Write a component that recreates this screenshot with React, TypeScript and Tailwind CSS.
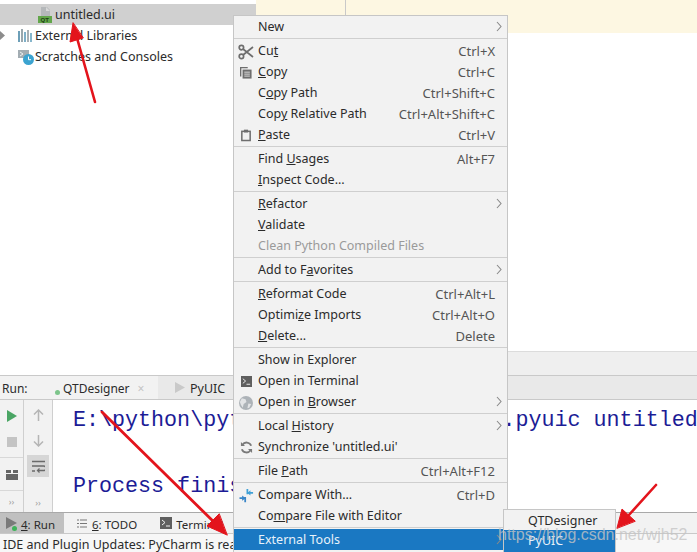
import React from "react";

const Chevron = () => (
  <svg width="6" height="11" viewBox="0 0 6 11" className="absolute right-[5px] top-[5px]">
    <path d="M1 1l4 4.5L1 10" fill="none" stroke="#8a8a8a" strokeWidth="1.1" />
  </svg>
);

const Scissors = () => (
  <svg width="16" height="16" viewBox="0 0 16 16" fill="none" stroke="#6e6e6e" strokeWidth="1.7">
    <circle cx="3.4" cy="3.6" r="2.2" />
    <circle cx="3.4" cy="12.4" r="2.2" />
    <path d="M5 5l10 8M5 11L15 3" />
  </svg>
);
const CopyIcon = () => (
  <svg width="12" height="12" viewBox="0 0 14 14">
    <path d="M0 0h9v1.6H1.6V11H0z" fill="#6e6e6e" />
    <path d="M3 3h10.5v10.5H3z" fill="#6e6e6e" />
    <path d="M5 6h6.5M5 8.3h6.5M5 10.6h6.5" stroke="#eee" strokeWidth="1" />
  </svg>
);
const PasteIcon = () => (
  <svg width="10" height="13" viewBox="0 0 12 14" fill="none">
    <rect x="1" y="2" width="10" height="11" stroke="#6e6e6e" strokeWidth="1.8" />
    <rect x="3.5" y="0" width="5" height="3.4" fill="#6e6e6e" />
  </svg>
);
const TerminalIcon = ({ size = 12 }: { size?: number }) => (
  <svg width={size} height={size} viewBox="0 0 12 12">
    <rect width="12" height="12" fill="#5f5f5f" />
    <path d="M2 3l3 2.5L2 8" fill="none" stroke="#f2f2f2" strokeWidth="1" />
    <path d="M6 9h4" stroke="#f2f2f2" strokeWidth="1" />
  </svg>
);
const GlobeIcon = () => (
  <svg width="14" height="14" viewBox="0 0 15 15">
    <circle cx="7.5" cy="7.5" r="7.5" fill="#adb3b8" />
    <path d="M3 2.5l4 1 1 3-3 2-1 4-2-3-1-3zM10 8l3 .5-2 4-2 .5z" fill="#e2e4e6" />
  </svg>
);
const SyncIcon = () => (
  <svg width="13" height="13" viewBox="0 0 14 14" fill="none" stroke="#7a7a7a" strokeWidth="2">
    <path d="M12 5.2A5.2 5.2 0 0 0 2.6 4.2" />
    <path d="M2 8.800a5.200 5.200 0 0 0 9.400 1" />
    <path d="M1 1v4.400h4.400z M13 13V8.600H8.600z" fill="#7a7a7a" stroke="none" />
  </svg>
);
const CompareIcon = () => (
  <svg width="15" height="14" viewBox="0 0 16 16" fill="none" strokeWidth="2">
    <path d="M0 10.500h5.500M6.500 15V9" stroke="#3a86c8" />
    <path d="M3 7.500L7 10.500 3 13.500z" fill="#3a86c8" />
    <path d="M15.500 4.500H10M9 0v6" stroke="#3fa0d6" />
    <path d="M12.500 1.500L9 4.500l3.500 3z" fill="#3fa0d6" />
  </svg>
);
const QtFile = () => (
  <svg width="15" height="16" viewBox="0 0 15 16">
    <path d="M3 0h6l3 3v7H3z" fill="#b5b8ba" />
    <path d="M8 0v4h4" fill="#d8d8d8" />
    <rect x="0" y="9" width="14" height="7" fill="#62a64a" />
    <text x="2.500" y="15" fontSize="6" fontFamily="Liberation Sans" fontWeight="700" fill="#1f3d16">QT</text>
  </svg>
);
const LibIcon = () => (
  <svg width="15" height="13" viewBox="0 0 15 13">
    <path d="M0 2h2v11H0z" fill="#6d9fb8" />
    <path d="M3 0h2v13H3z" fill="#9aa7ad" />
    <path d="M6 3h2v10H6z" fill="#7fb0c8" />
    <path d="M9 1h2v12H9z" fill="#a9b0b4" />
    <path d="M12 4h2v9h-2z" fill="#86b6cc" />
  </svg>
);
const ScratchIcon = () => (
  <svg width="16" height="15" viewBox="0 0 16 15">
    <path d="M0 0h11v8H0z" fill="#a3adb3" />
    <path d="M2 2l3 2-3 2" fill="none" stroke="#eef1f2" strokeWidth="1" />
    <circle cx="10.500" cy="9.500" r="5.500" fill="#3ba3d0" />
    <path d="M10.500 6.500v3.200h2.500" fill="none" stroke="#fff" strokeWidth="1" />
  </svg>
);

type Row = {
  label: React.ReactNode;
  key?: string;
  sub?: boolean;
  icon?: React.ReactNode;
  disabled?: boolean;
  active?: boolean;
};

const groups: Row[][] = [
  [{ label: "New", sub: true }],
  [
    { label: <>Cu<u>t</u></>, key: "Ctrl+X", icon: <Scissors /> },
    { label: <><u>C</u>opy</>, key: "Ctrl+C", icon: <CopyIcon /> },
    { label: <>C<u>o</u>py Path</>, key: "Ctrl+Shift+C" },
    { label: <>Cop<u>y</u> Relative Path</>, key: "Ctrl+Alt+Shift+C" },
    { label: <><u>P</u>aste</>, key: "Ctrl+V", icon: <PasteIcon /> },
  ],
  [
    { label: <>Find <u>U</u>sages</>, key: "Alt+F7" },
    { label: <><u>I</u>nspect Code...</> },
  ],
  [
    { label: <><u>R</u>efactor</>, sub: true },
    { label: <><u>V</u>alidate</> },
    { label: "Clean Python Compiled Files", disabled: true },
  ],
  [{ label: <>Add to F<u>a</u>vorites</>, sub: true }],
  [
    { label: <><u>R</u>eformat Code</>, key: "Ctrl+Alt+L" },
    { label: <>Optimi<u>z</u>e Imports</>, key: "Ctrl+Alt+O" },
    { label: <><u>D</u>elete...</>, key: "Delete" },
  ],
  [
    { label: "Show in Explorer" },
    { label: "Open in Terminal", icon: <TerminalIcon size={11} /> },
    { label: <>Open in <u>B</u>rowser</>, sub: true, icon: <GlobeIcon /> },
  ],
  [
    { label: <>Local <u>H</u>istory</>, sub: true },
    { label: "Synchronize 'untitled.ui'", icon: <SyncIcon /> },
  ],
  [{ label: <>File <u>P</u>ath</>, key: "Ctrl+Alt+F12" }],
  [
    { label: "Compare With...", key: "Ctrl+D", icon: <CompareIcon /> },
    { label: <>Co<u>m</u>pare File with Editor</> },
  ],
  [{ label: "External Tools", active: true, sub: true }],
];

function MenuRow({ r }: { r: Row }) {
  return (
    <div
      className={
        "relative flex h-[21px] items-center pr-[12px] pt-[2px] " +
        (r.active ? "bg-[#1a78c2] text-[#e8f2fa]" : r.disabled ? "text-[#9a9a9a]" : "text-[#2b2b2b]")
      }
    >
      <span className="mr-[2px] flex w-[22px] shrink-0 justify-center pl-[2px]">{r.icon}</span>
      <span className="flex-1 whitespace-nowrap">{r.label}</span>
      {r.key && <span className="whitespace-nowrap text-[13px] text-[#555]">{r.key}</span>}
      {r.sub && <Chevron />}
    </div>
  );
}

export default function App() {
  return (
    <div className="relative flex h-[552px] w-[697px] flex-col overflow-hidden bg-white font-['Noto_Sans',sans-serif] text-[12.5px] text-[#2b2b2b]">
      {/* top: project tree and editor */}
      <div className="flex h-[375px] shrink-0">
        <div className="w-[256px] shrink-0 pt-[4px]">
          <div className="flex h-[21px] items-center gap-[2px] bg-[#d0d0d0] pl-[38px]">
            <QtFile />
            <span className="pt-[2px]">untitled.ui</span>
          </div>
          <div className="relative flex h-[21px] items-center gap-[2px] pl-[18px]">
            <svg width="6" height="9" viewBox="0 0 6 9" className="absolute left-0 top-[6px]">
              <path d="M0 0l5 4.500L0 9z" fill="#8c8c8c" />
            </svg>
            <LibIcon />
            <span className="pt-[1px]">External Libraries</span>
          </div>
          <div className="flex h-[22px] items-center gap-[1px] pl-[18px]">
            <ScratchIcon />
            <span>Scratches and Consoles</span>
          </div>
        </div>
        <div className="flex flex-1 flex-col">
          <div className="flex h-[33px] bg-[#fdf7e2]">
            <div className="w-[90px] border-r border-[#c9c9c9]" />
          </div>
          <div className="flex-1" />
          <div className="h-[24px] border-t border-[#dcdcdc] bg-[#efefef]" />
        </div>
      </div>

      {/* run tool window header */}
      <div className="flex h-[25px] shrink-0 items-center border-y border-[#c9c9c9] bg-[#f2f2f2] text-[12px]">
        <span className="w-[54px] pl-[2px] pt-[3px]">Run:</span>
        <span className="flex h-full w-[104px] items-center pl-[1px]">
          <span className="mr-[3px] mt-[10px] h-[5px] w-[5px] shrink-0 rounded-full bg-[#7cc48a]" />
          <span className="pt-[3px]">QTDesigner</span>
          <span className="ml-[8px] pt-[3px] text-[#c4c4c4]">×</span>
        </span>
        <span className="flex h-full flex-1 items-center bg-[#e9e9e9] pl-[17px]">
          <svg width="10" height="11" viewBox="0 0 10 11"><path d="M0 0l10 5.500L0 11z" fill="#c9c9c9" /></svg>
          <span className="ml-[5px] pt-[3px] text-[12.5px]">PyUIC</span>
        </span>
      </div>

      {/* run tool window body */}
      <div className="flex h-[112px] shrink-0">
        <div className="flex w-[24px] shrink-0 flex-col border-r border-[#cfcfcf] bg-[#f2f2f2]">
          <div className="flex h-[58px] flex-col items-center gap-[15px] border-b border-[#d8d8d8] pt-[10px]">
            <svg width="10" height="12" viewBox="0 0 10 12"><path d="M0 0l10 6-10 6z" fill="#4aa564" /></svg>
            <span className="h-[10px] w-[10px] bg-[#c4c4c4]" />
          </div>
          <div className="flex h-[33px] items-center justify-center border-b border-[#d8d8d8] pt-[2px]">
            <svg width="12" height="10" viewBox="0 0 12 10">
              <path d="M0 0h5v3H0zM7 0h5v3H7zM0 4h12v6H0z" fill="#666" />
            </svg>
          </div>
          <div className="flex flex-1 items-center justify-center text-[9px] text-[#a0a0a0]">››</div>
        </div>
        <div className="flex w-[29px] shrink-0 flex-col items-center border-r border-[#cfcfcf] bg-[#f2f2f2] pt-[9px]">
          <svg width="11" height="12" viewBox="0 0 11 12" fill="none" stroke="#b5b5b5" strokeWidth="1.5"><path d="M5.500 12V1M1 5.500L5.500 1 10 5.500" /></svg>
          <svg width="11" height="12" viewBox="0 0 11 12" fill="none" stroke="#b5b5b5" strokeWidth="1.5" className="mt-[14px]"><path d="M5.500 0v11M1 6.500L5.500 11 10 6.500" /></svg>
          <div className="mt-[8px] flex h-[22px] w-[22px] items-center justify-center bg-[#d6d6d6]">
            <svg width="13" height="13" viewBox="0 0 13 13" fill="none" stroke="#6a6a6a" strokeWidth="1.3">
              <path d="M0 1.500h13M0 6h11.500a1.800 1.800 0 0 1 0 4.500H6M0 11h3" />
              <path d="M7.500 8.500L5.500 10.500l2 2" />
            </svg>
          </div>
          <div className="mt-auto pb-[5px] text-[9px] leading-none text-[#a0a0a0]">››</div>
        </div>
        <div className="flex-1 overflow-hidden whitespace-pre pl-[20px] pt-[4px] font-['Liberation_Mono',monospace] text-[21.7px] leading-[33px] text-[#1c1c96]">
          {"E:\\python\\python.exe -m PyQt5.uic.pyuic untitled.ui\n\nProcess finished"}
        </div>
      </div>

      {/* bottom tool strip */}
      <div className="flex h-[21px] shrink-0 items-center border-t border-[#a9a9a9] bg-[#f2f2f2] text-[11.5px]">
        <div className="relative flex h-full w-[64px] items-center bg-[#c0c0c0] pl-[21px]">
          <svg width="11" height="12" viewBox="0 0 11 12" className="absolute left-[6px] top-[4px]"><path d="M0 0l11 6-11 6z" fill="#7a7a7a" /></svg>
          <span className="absolute left-[12px] top-[13px] h-[5px] w-[5px] rounded-full bg-[#3fb35a]" />
          <span className="pt-[3px]"><u>4</u>: Run</span>
        </div>
        <div className="ml-[13px] flex items-center gap-[5px]">
          <svg width="10" height="9" viewBox="0 0 10 9" stroke="#777" strokeWidth="1.2"><path d="M0 1h2M3 1h7M0 4.500h2M3 4.500h7M0 8h2M3 8h7" /></svg>
          <span className="pt-[3px]"><u>6</u>: TODO</span>
        </div>
        <div className="ml-[23px] flex items-center gap-[4px]">
          <TerminalIcon />
          <span className="pt-[3px]">Terminal</span>
        </div>
      </div>

      {/* status bar */}
      <div className="flex h-[19px] shrink-0 items-center whitespace-nowrap border-t border-[#c9c9c9] bg-[#f7f7f7] pl-[3px] pt-[4px]">
        IDE and Plugin Updates: PyCharm is ready to update.
      </div>

      {/* context menu */}
      <div className="absolute left-[233px] top-[15px] w-[275px] border border-[#c6c6c6] bg-[#f2f2f2] pb-[2px]">
        {groups.map((g, i) => (
          <div key={i}>
            {i > 0 && (
              <div className="flex h-[3px] items-center">
                <div className="h-px w-full bg-[#cfcfcf]" />
              </div>
            )}
            {g.map((r, j) => (
              <MenuRow key={j} r={r} />
            ))}
          </div>
        ))}
      </div>

      {/* submenu */}
      <div className="absolute left-[503px] top-[509px] w-[113px] border border-[#c6c6c6] bg-[#f2f2f2]">
        <div className="flex h-[20px] items-center pl-[24px] pt-[2px]">QTDesigner</div>
        <div className="flex h-[22px] items-center bg-[#1a78c2] pl-[24px] text-[#e8f2fa]">PyUIC</div>
      </div>

      {/* annotation arrows */}
      <svg width="697" height="552" viewBox="0 0 697 552" className="pointer-events-none absolute left-0 top-0">
        <g fill="#e3141c" stroke="#e3141c" strokeLinecap="round">
          <path d="M95 102L77 38" strokeWidth="2.6" fill="none" />
          <path d="M73 23L70 42 83 38z" />
          <path d="M102 412L218 526" strokeWidth="2.8" fill="none" />
          <path d="M227 535L207 526 219 514z" />
          <path d="M656 485L628 516" strokeWidth="2.6" fill="none" />
          <path d="M617 528L622 509 635 521z" />
        </g>
      </svg>

      {/* watermark */}
      <span className="pointer-events-none absolute left-[498px] top-[523px] whitespace-nowrap font-['Liberation_Sans',sans-serif] text-[16px] text-[#c4c4c4]/80">
        https://blog.csdn.net/wjh52
      </span>
    </div>
  );
}
